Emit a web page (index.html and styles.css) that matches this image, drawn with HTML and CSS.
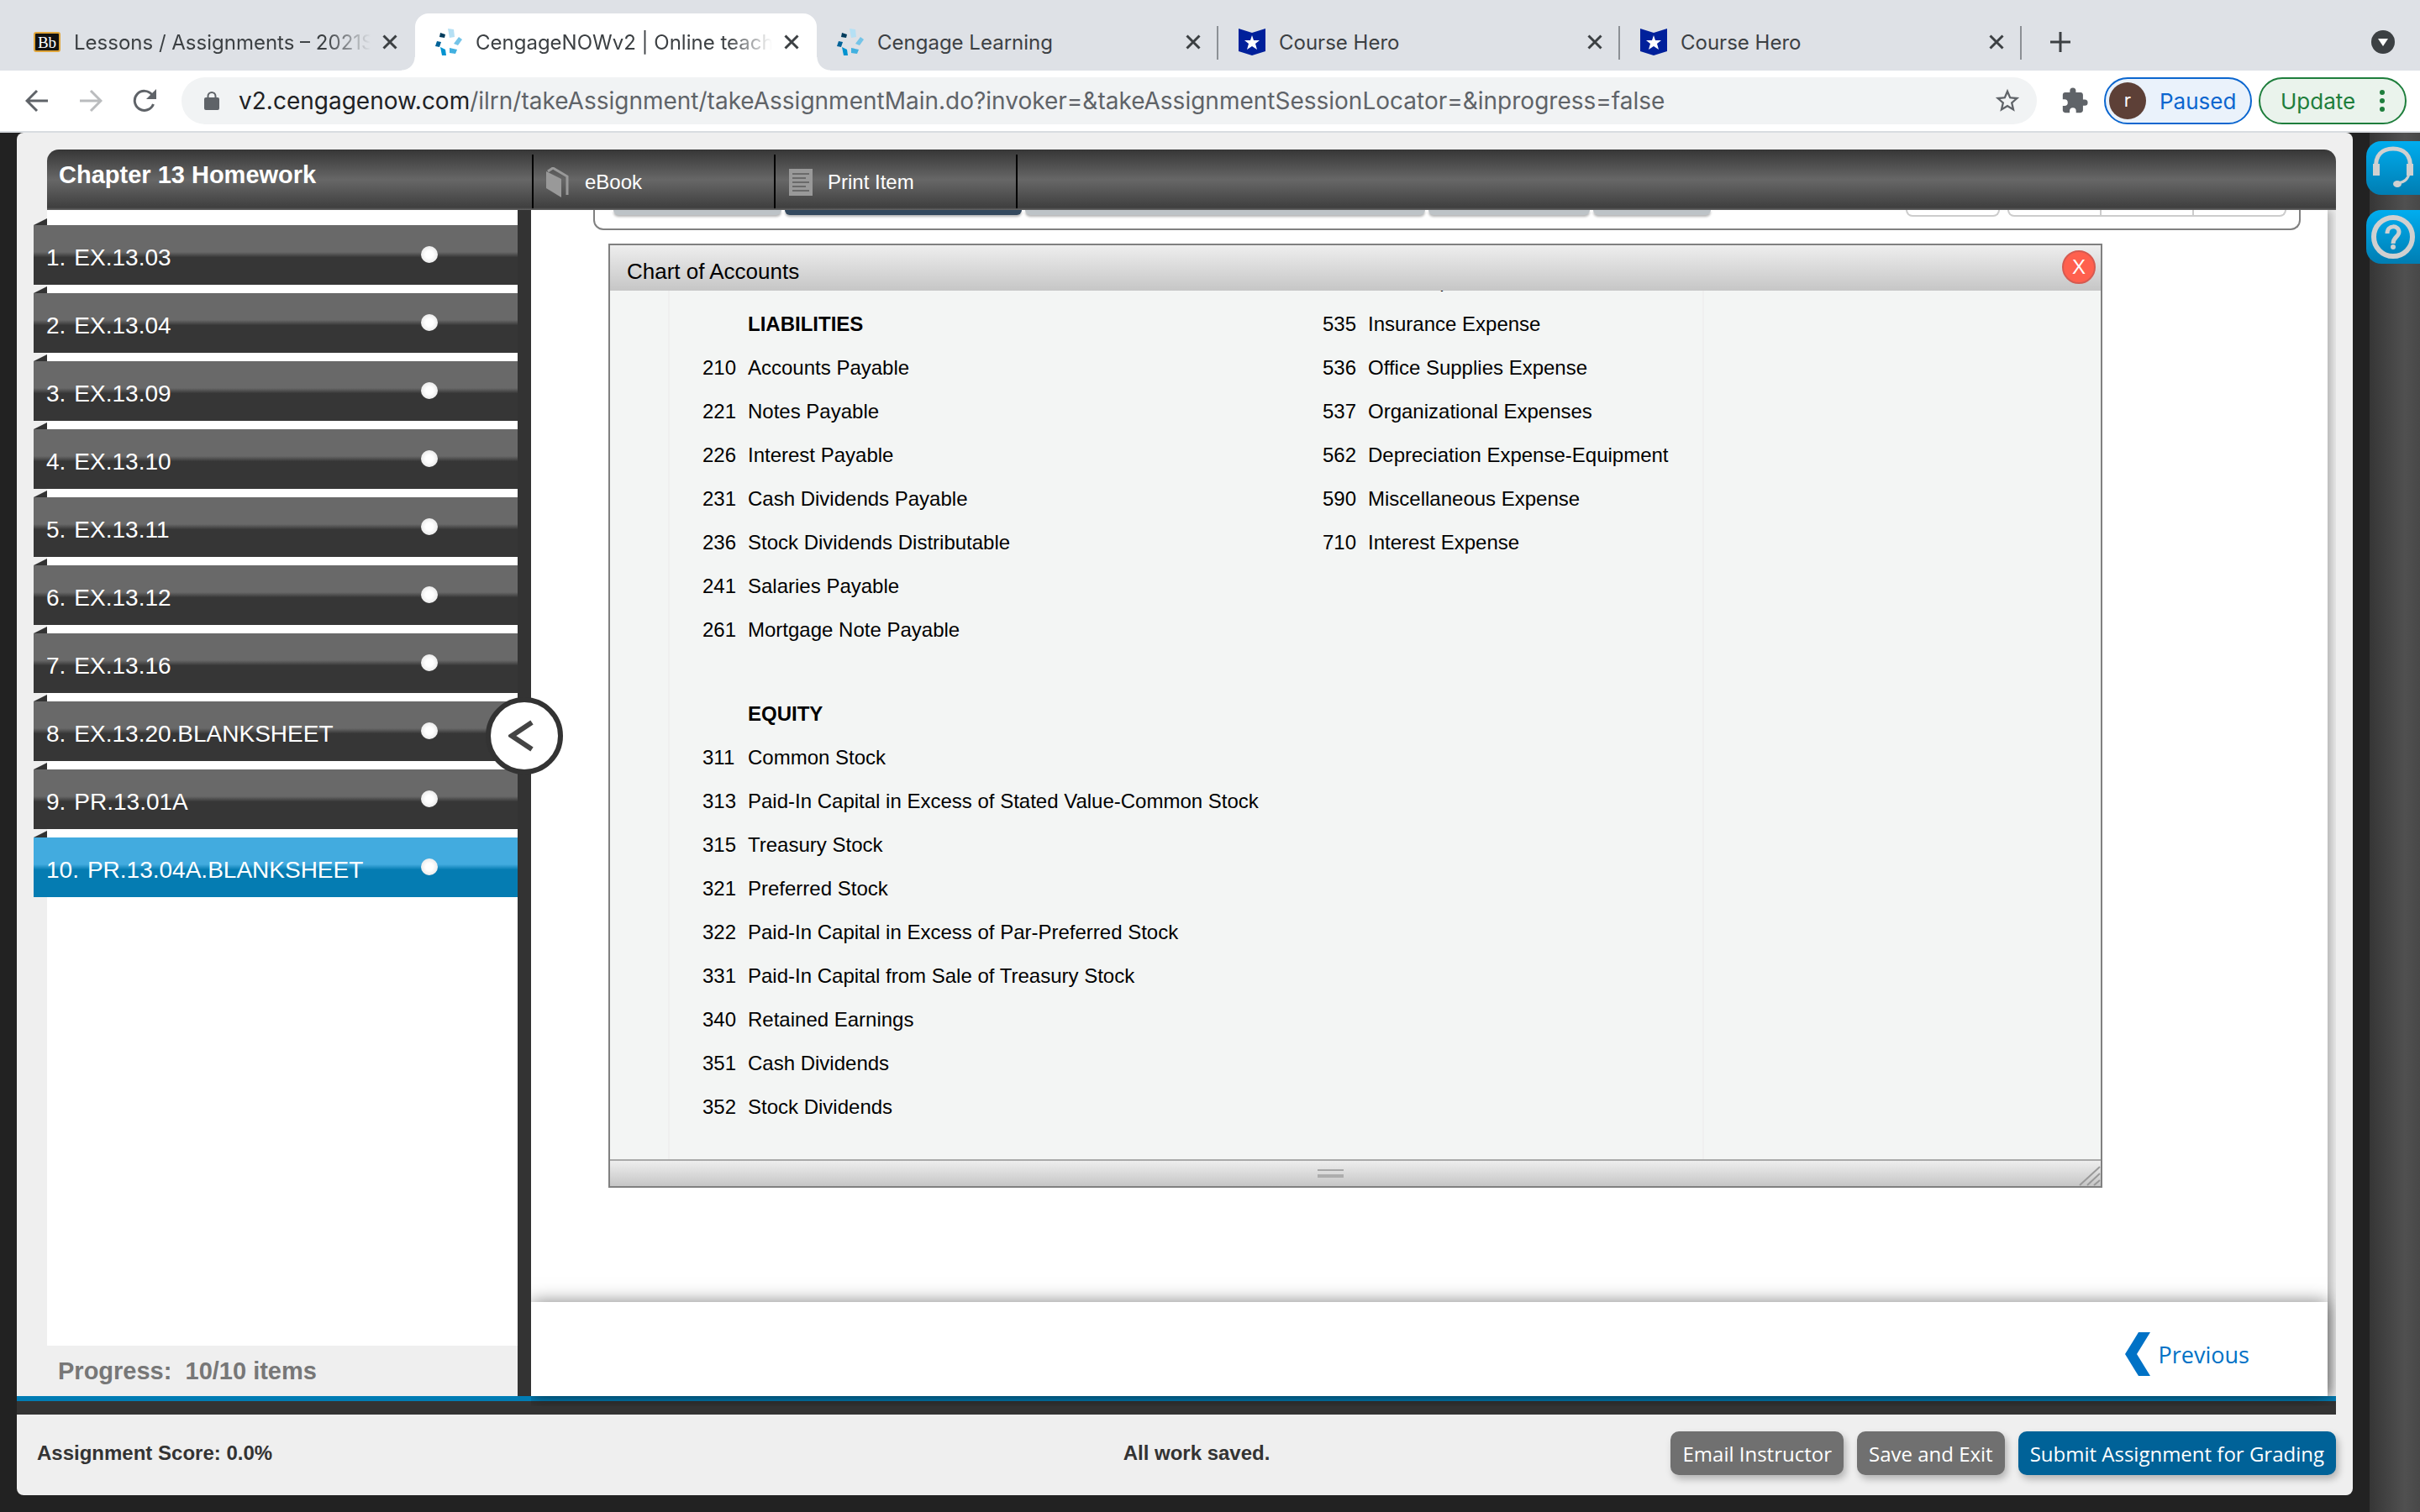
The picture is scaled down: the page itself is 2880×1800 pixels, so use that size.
FILE: index.html
```html
<!DOCTYPE html>
<html lang="en">
<head>
<meta charset="utf-8">
<title>CengageNOWv2 | Online teaching</title>
<link rel="stylesheet" href="styles.css">
</head>
<body>
<svg class="defs" aria-hidden="true">
  <symbol id="close" viewBox="0 0 18 18"><path d="M1.500 1.500l15 15M16.500 1.500l-15 15" stroke="currentColor" stroke-width="3" fill="none"/></symbol>
  <symbol id="cengage" viewBox="0 0 32 32">
    <path fill="#b5e0f4" d="M15 0l7 1 1 9-6 1z"/>
    <path fill="#003b5c" d="M6 5l6 2-1 4-6-1z"/>
    <path fill="#74c4e8" d="M28 10l4 3-5 7-5-2z"/>
    <path fill="#006298" d="M2 15l5 1-2 6-5-1z"/>
    <path fill="#41b0e0" d="M17 23l9 2-2 5-7-1z"/>
    <path fill="#0093d0" d="M6 22l6 3 1 7H8z"/>
  </symbol>
  <symbol id="hero" viewBox="0 0 32 32"><path fill="#00209b" d="M0 0l16 5L32 0v27l-16 5-16-5z"/><path fill="#fff" d="M16 8l2 6h7l-5 4 2 7-6-4-6 4 2-7-5-4h7z"/></symbol>
</svg>

<header class="browser">
  <nav class="tabs" aria-label="Open tabs">
    <div class="tab">
      <svg class="favicon" viewBox="0 0 32 32"><rect x="1" y="5" width="30" height="22" rx="2" fill="#111" stroke="#e0a53a" stroke-width="2"/><text x="16" y="23" text-anchor="middle" class="bb">Bb</text></svg>
      <span class="tab-title faded">Lessons / Assignments – 2021S</span>
      <button class="tab-close" aria-label="Close tab"><svg><use href="#close"/></svg></button>
    </div>
    <div class="tab active">
      <svg class="favicon"><use href="#cengage"/></svg>
      <span class="tab-title faded">CengageNOWv2 | Online teachi</span>
      <button class="tab-close" aria-label="Close tab"><svg><use href="#close"/></svg></button>
    </div>
    <div class="tab ruled">
      <svg class="favicon"><use href="#cengage"/></svg>
      <span class="tab-title">Cengage Learning</span>
      <button class="tab-close" aria-label="Close tab"><svg><use href="#close"/></svg></button>
    </div>
    <div class="tab ruled">
      <svg class="favicon"><use href="#hero"/></svg>
      <span class="tab-title">Course Hero</span>
      <button class="tab-close" aria-label="Close tab"><svg><use href="#close"/></svg></button>
    </div>
    <div class="tab ruled">
      <svg class="favicon"><use href="#hero"/></svg>
      <span class="tab-title">Course Hero</span>
      <button class="tab-close" aria-label="Close tab"><svg><use href="#close"/></svg></button>
    </div>
    <button class="new-tab" aria-label="New tab"><svg viewBox="0 0 24 24"><path d="M12 0v24M0 12h24" stroke="#3c4043" stroke-width="3"/></svg></button>
    <button class="tab-search" aria-label="Search tabs"><svg viewBox="0 0 28 28"><circle cx="14" cy="14" r="14" fill="#3c4043"/><path fill="#fff" d="M8 10h12l-6 9z"/></svg></button>
  </nav>
  <div class="toolbar">
    <button class="nav-btn" aria-label="Back"><svg viewBox="0 0 28 28"><path d="M27 14H3M14 2L2 14l12 12" fill="none" stroke="#5f6368" stroke-width="3"/></svg></button>
    <button class="nav-btn" aria-label="Forward"><svg viewBox="0 0 28 28"><path d="M1 14h24M14 2l12 12-12 12" fill="none" stroke="#babcbe" stroke-width="3"/></svg></button>
    <button class="nav-btn" aria-label="Reload"><svg viewBox="0 0 28 28"><path d="M24.500 18A11.500 11.500 0 1 1 23 7" fill="none" stroke="#5f6368" stroke-width="3"/><path fill="#5f6368" d="M28 0v12H16z"/></svg></button>
    <div class="omnibox">
      <svg class="lock" viewBox="0 0 18 22"><rect y="7" width="18" height="15" rx="2" fill="#5f6368"/><path d="M4.500 8V5.500a4.500 4.500 0 0 1 9 0V8" fill="none" stroke="#5f6368" stroke-width="2"/></svg>
      <span class="url"><b>v2.cengagenow.com</b>/ilrn/takeAssignment/takeAssignmentMain.do?invoker=&amp;takeAssignmentSessionLocator=&amp;inprogress=false</span>
      <button class="star" aria-label="Bookmark"><svg viewBox="0 0 24 24"><path fill="#5f6368" d="M22 9.240l-7.190-.62L12 2 9.190 8.630 2 9.240l5.460 4.730L5.820 21 12 17.270 18.180 21l-1.630-7.030L22 9.240zM12 15.400l-3.760 2.270 1-4.280-3.320-2.880 4.380-.38L12 6.100l1.710 4.040 4.380.38-3.320 2.880 1 4.280L12 15.400z"/></svg></button>
    </div>
    <button class="puzzle" aria-label="Extensions"><svg viewBox="0 0 24 24"><path fill="#5f6368" d="M20.500 11H19V7c0-1.100-.9-2-2-2h-4V3.500a2.500 2.500 0 0 0-5 0V5H4c-1.100 0-2 .9-2 2v3.800h1.500a2.700 2.700 0 0 1 0 5.400H2V20c0 1.100.9 2 2 2h3.800v-1.500a2.700 2.700 0 0 1 5.400 0V22H17c1.100 0 2-.9 2-2v-4h1.500a2.500 2.500 0 0 0 0-5z"/></svg></button>
    <button class="pill paused"><span class="avatar">r</span>Paused</button>
    <button class="pill update">Update<svg viewBox="0 0 6 28"><circle cx="3" cy="4" r="3"/><circle cx="3" cy="14" r="3"/><circle cx="3" cy="24" r="3"/></svg></button>
  </div>
</header>

<div class="page">
  <div class="shell">
    <div class="appbar">
      <h1>Chapter 13 Homework</h1>
      <div class="tools">
        <button class="tool"><svg viewBox="0 0 28 36"><path d="M2 5l6-4 17 10v22" fill="none" stroke="#999" stroke-width="3"/><path fill="#999" d="M0 5l18 9v22L0 25z"/></svg>eBook</button>
        <button class="tool"><svg viewBox="0 0 28 36"><path fill="#999" d="M0 2h28v32H0z"/><path d="M4 8h20M4 13h16M4 18h20M4 23h16M4 28h20" stroke="#6a6a6a" stroke-width="2"/></svg>Print Item</button>
      </div>
    </div>
    <div class="work">
      <aside class="sidebar">
        <ol class="items">
          <li><a href="#i1"><span>1.</span> EX.13.03<i></i></a></li>
          <li><a href="#i2"><span>2.</span> EX.13.04<i></i></a></li>
          <li><a href="#i3"><span>3.</span> EX.13.09<i></i></a></li>
          <li><a href="#i4"><span>4.</span> EX.13.10<i></i></a></li>
          <li><a href="#i5"><span>5.</span> EX.13.11<i></i></a></li>
          <li><a href="#i6"><span>6.</span> EX.13.12<i></i></a></li>
          <li><a href="#i7"><span>7.</span> EX.13.16<i></i></a></li>
          <li><a href="#i8"><span>8.</span> EX.13.20.BLANKSHEET<i></i></a></li>
          <li><a href="#i9"><span>9.</span> PR.13.01A<i></i></a></li>
          <li class="current"><a href="#i10"><span>10.</span> PR.13.04A.BLANKSHEET<i></i></a></li>
        </ol>
        <p class="progress">Progress:&nbsp; 10/10 items</p>
        <button class="collapse" aria-label="Collapse list"><svg viewBox="0 0 30 38"><path d="M28 3L4 19l24 16" fill="none" stroke="#444" stroke-width="6"/></svg></button>
      </aside>
      <main class="content">
        <div class="sheet">
          <div class="panel-tabs">
            <span class="ptab t1"></span><span class="ptab t2"></span><span class="ptab t3"></span><span class="ptab t4"></span><span class="ptab t5"></span>
            <span class="outline single"></span>
            <span class="outline group"><span></span><span></span><span></span></span>
          </div>
          <section class="dialog">
            <header><h2>Chart of Accounts</h2><button class="dismiss" aria-label="Close">X</button></header>
            <div class="dialog-body">
              <div class="accounts">
                <table>
                  <tr><td></td><th></th></tr>
                  <tr><td></td><th>LIABILITIES</th></tr>
                  <tr><td>210</td><td>Accounts Payable</td></tr>
                  <tr><td>221</td><td>Notes Payable</td></tr>
                  <tr><td>226</td><td>Interest Payable</td></tr>
                  <tr><td>231</td><td>Cash Dividends Payable</td></tr>
                  <tr><td>236</td><td>Stock Dividends Distributable</td></tr>
                  <tr><td>241</td><td>Salaries Payable</td></tr>
                  <tr><td>261</td><td>Mortgage Note Payable</td></tr>
                  <tr class="space"><td colspan="2"></td></tr>
                  <tr><td></td><th>EQUITY</th></tr>
                  <tr><td>311</td><td>Common Stock</td></tr>
                  <tr><td>313</td><td>Paid-In Capital in Excess of Stated Value-Common Stock</td></tr>
                  <tr><td>315</td><td>Treasury Stock</td></tr>
                  <tr><td>321</td><td>Preferred Stock</td></tr>
                  <tr><td>322</td><td>Paid-In Capital in Excess of Par-Preferred Stock</td></tr>
                  <tr><td>331</td><td>Paid-In Capital from Sale of Treasury Stock</td></tr>
                  <tr><td>340</td><td>Retained Earnings</td></tr>
                  <tr><td>351</td><td>Cash Dividends</td></tr>
                  <tr><td>352</td><td>Stock Dividends</td></tr>
                </table>
                <table>
                  <tr><td>534</td><td>Rent Expense</td></tr>
                  <tr><td>535</td><td>Insurance Expense</td></tr>
                  <tr><td>536</td><td>Office Supplies Expense</td></tr>
                  <tr><td>537</td><td>Organizational Expenses</td></tr>
                  <tr><td>562</td><td>Depreciation Expense-Equipment</td></tr>
                  <tr><td>590</td><td>Miscellaneous Expense</td></tr>
                  <tr><td>710</td><td>Interest Expense</td></tr>
                </table>
              </div>
            </div>
            <footer><span class="grip"></span><svg class="resize" viewBox="0 0 26 24"><path d="M1 23L25 1M10 23L25 9M18 23l7-6" stroke="#999" stroke-width="2"/></svg></footer>
          </section>
        </div>
        <div class="pager"><a href="#prev"><svg viewBox="0 0 30 52"><path fill="#0072c6" d="M16 0h14L14 26l16 26H16L0 26z"/></svg>Previous</a></div>
      </main>
    </div>
    <div class="rule"></div>
    <footer class="status">
      <p>Assignment Score: 0.0%</p>
      <p class="saved">All work saved.</p>
      <div class="actions"><button>Email Instructor</button><button>Save and Exit</button><button class="primary">Submit Assignment for Grading</button></div>
    </footer>
  </div>
  <div class="gutter">
    <button class="side-tab" aria-label="Support"><svg viewBox="0 0 52 52"><path d="M6 26C4 11 13 3 26 3s22 8 20 23" fill="none" stroke="#d0d0d0" stroke-width="5"/><path d="M6 21v14M46 21v14" stroke="#d0d0d0" stroke-width="8"/><path d="M45 32c-1 8-7 11-13 12" fill="none" stroke="#d0d0d0" stroke-width="3"/><ellipse cx="31" cy="45" rx="5" ry="4" fill="#d0d0d0"/></svg></button>
    <button class="side-tab" aria-label="Help"><svg viewBox="0 0 52 52"><circle cx="26" cy="26" r="23" fill="none" stroke="#d0d0d0" stroke-width="6"/><path d="M19 22c0-11 14-10 14-2 0 6-7 6-7 14" fill="none" stroke="#d0d0d0" stroke-width="5"/><circle cx="26" cy="38" r="3" fill="#d0d0d0"/></svg></button>
  </div>
</div>
</body>
</html>
```
FILE: styles.css
```css
* { box-sizing: border-box; }
body {
  margin: 0;
  min-height: 100vh;
  display: flex;
  flex-direction: column;
  font-family: "Liberation Sans", Arial, sans-serif;
  font-size: 24px;
  background: #222;
}
button { font: inherit; color: inherit; border: 0; padding: 0; background: none; cursor: pointer; }
svg { display: block; }
h1, h2, p, ol { margin: 0; padding: 0; font-size: inherit; }
.defs { display: none; }

/* browser chrome */
.browser { font-family: Inter, sans-serif; background: #fff; border-bottom: 2px solid #d8dce0; }
.tabs { display: flex; height: 84px; padding: 16px 30px 0 16px; background: #dee1e6; align-items: stretch; }
.tab {
  flex: 0 1 478px;
  min-width: 0;
  display: flex;
  align-items: center;
  padding: 0 19px 0 24px;
  color: #3c4043;
  position: relative;
}
.tab.active { background: #fff; border-radius: 16px 16px 0 0; }
.tab.active::before, .tab.active::after {
  content: "";
  position: absolute;
  bottom: 0;
  width: 16px;
  height: 16px;
}
.tab.active::before { left: -16px; background: radial-gradient(circle at 0 0, #dee1e6 15px, #fff 16px); }
.tab.active::after { right: -16px; background: radial-gradient(circle at 100% 0, #dee1e6 15px, #fff 16px); }
.tab.ruled::after {
  content: "";
  position: absolute;
  right: 0;
  top: 15px;
  width: 2px;
  height: 40px;
  background: #8c9095;
}
.favicon { width: 32px; height: 32px; margin-right: 16px; flex: none; }
.bb { font: 19px "Liberation Serif", serif; fill: #fff; }
.tab-title { flex: 1; min-width: 0; white-space: nowrap; overflow: hidden; margin-right: 12px; }
.faded { -webkit-mask-image: linear-gradient(to right, #000 85%, transparent); mask-image: linear-gradient(to right, #000 85%, transparent); }
.tab-close { flex: none; width: 22px; height: 22px; display: grid; place-items: center; }
.tab-close svg { width: 18px; height: 18px; }
.new-tab { margin-left: 34px; }
.new-tab svg { width: 24px; height: 24px; }
.tab-search { margin-left: auto; }
.tab-search svg { width: 28px; height: 28px; }
.toolbar { display: flex; align-items: center; height: 72px; padding: 0 16px 0 30px; }
.nav-btn { margin-right: 36px; }
.nav-btn svg { width: 28px; height: 28px; }
.omnibox {
  flex: 1;
  min-width: 0;
  display: flex;
  align-items: center;
  height: 56px;
  margin-left: -6px;
  padding: 0 18px 0 27px;
  border-radius: 28px;
  background: #f1f3f4;
}
.lock { width: 18px; height: 22px; margin-right: 23px; flex: none; }
.url { flex: 1; min-width: 0; white-space: nowrap; overflow: hidden; font-size: 28px; color: #5f6368; }
.url b { font-weight: 400; color: #202124; }
.star svg { width: 34px; height: 34px; }
.puzzle { margin: 0 18px 0 28px; }
.puzzle svg { width: 34px; height: 34px; }
.pill { display: flex; align-items: center; height: 56px; width: 176px; border: 2px solid; border-radius: 28px; font-size: 26px; }
.paused { color: #0b66cf; background: #eaf2fb; padding-left: 4px; margin-right: 8px; }
.avatar { width: 44px; height: 44px; border-radius: 50%; background: #5d4037; color: #fff; font-size: 22px; line-height: 42px; text-align: center; margin-right: 16px; }
.update { color: #1e7e3c; background: #eaf3ec; padding: 0 24px; justify-content: space-between; }
.update svg { width: 6px; height: 28px; fill: currentColor; }

/* page frame */
.page { flex: 1; display: flex; padding: 0 0 20px 20px; }
.shell { flex: 1; min-width: 0; display: flex; flex-direction: column; background: #efefef; border-radius: 8px; padding-top: 20px; }
.gutter {
  width: 60px;
  margin: 0 0 -20px 20px;
  padding-top: 10px;
  background: linear-gradient(90deg, #363636, #505050 70%, #484848);
}
.side-tab { display: block; width: 64px; height: 64px; margin: 0 0 18px -4px; padding: 6px; border-radius: 18px 0 0 18px; background: linear-gradient(#00adef, #007db2); }
.side-tab svg { width: 52px; height: 52px; }

.appbar {
  position: relative;
  z-index: 2;
  display: flex;
  height: 72px;
  margin: 0 20px 0 36px;
  border-radius: 14px 14px 0 0;
  color: #fff;
  background: linear-gradient(#363636, #676767 50%, #464646 88%, #3f3f3f 96%, #666);
}
.appbar h1 { width: 577px; padding: 0 0 0 14px; font-size: 29px; line-height: 60px; }
.tools { display: flex; padding: 6px 0 2px; }
.tool { display: flex; align-items: center; width: 288px; padding: 2px 0 0 16px; gap: 18px; border-right: 2px solid #000; }
.tool:first-child { border-left: 2px solid #000; width: 290px; padding-left: 15px; }
.tool svg { width: 28px; height: 36px; }

.work { flex: 1; display: flex; }
.sidebar {
  position: relative;
  width: 576px;
  margin-left: 20px;
  display: flex;
  flex-direction: column;
  background: linear-gradient(90deg, transparent 16px, #fff 16px);
}
.work .sidebar { box-sizing: content-box; border-right: 16px solid #333; }
.items { list-style: none; flex: 1; padding-top: 18px; display: flex; flex-direction: column; gap: 10px; }
.items li { position: relative; }
.items li::before { content: ""; position: absolute; left: 0; top: -8px; width: 16px; height: 8px; background: #333; clip-path: polygon(0 100%, 100% 0, 100% 100%); }
.items a {
  display: flex;
  align-items: center;
  height: 71px;
  padding: 6px 95px 0 15px;
  font-size: 28px;
  color: #fff;
  text-decoration: none;
  background: linear-gradient(#696969 45%, #363636 54%);
}
.items span { margin-right: 10px; }
.items .current a { background: linear-gradient(#42abdf 45%, #057cb2 54%); }
.items i { width: 20px; height: 20px; margin: -8px 0 0 auto; border-radius: 50%; background: radial-gradient(#fff 30%, #ddd); }
.progress { padding-left: 29px; height: 60px; line-height: 60px; font-size: 29px; font-weight: 700; color: #777; background: #efefef; }
.collapse {
  position: absolute;
  z-index: 3;
  right: -54px;
  top: 580px;
  width: 92px;
  height: 92px;
  border: 6px solid #333;
  border-radius: 50%;
  background: #fff;
  display: grid;
  place-items: center;
}
.collapse svg { width: 30px; height: 38px; margin-right: 8px; }

.content { flex: 1; min-width: 0; margin-right: 30px; display: flex; flex-direction: column; background: #fff; box-shadow: 5px 0 10px rgba(0, 0, 0, .25); clip-path: inset(0 -10px -12px 0); }
.sheet { flex: 1; padding: 0 32px 0 74px; }
.panel-tabs { display: flex; align-items: flex-start; gap: 4px; height: 24px; padding: 0 15px 0 22px; border: 2px solid #808080; border-top: 0; border-radius: 0 0 12px 12px; }
.ptab { height: 6px; background: #bdc3c7; border-radius: 0 0 6px 6px; box-shadow: 0 2px 3px rgba(0, 0, 0, .3); }
.t1 { width: 200px; }
.t2 { width: 282px; background: #34495e; }
.t3 { width: 476px; }
.t4 { width: 192px; }
.t5 { width: 140px; margin-right: auto; }
.outline { height: 8px; border: 2px solid #ccc; border-top: 0; border-radius: 0 0 8px 8px; }
.single { width: 112px; margin-right: 5px; }
.group { display: flex; width: 332px; }
.group span { flex: 1; }
.group span + span { border-left: 2px solid #ccc; }

.dialog { width: 1778px; max-width: 100%; margin: 16px 0 0 18px; border: 2px solid #808080; background: #f3f5f4; }
.dialog header { display: flex; justify-content: space-between; align-items: center; height: 54px; padding: 0 6px 2px 20px; background: linear-gradient(#eee, #c6c6c6); }
.dialog h2 { font-size: 26px; font-weight: 400; padding-top: 10px; }
.dismiss { width: 40px; height: 40px; border-radius: 50%; border: 2px solid #d65a50; background: #ff604e; color: #fff; }
.dialog-body { overflow: hidden; }
.accounts { display: flex; width: 1233px; margin: -38px 0 0 69px; padding: 0 0 36px 39px; border: 2px solid #efefef; border-width: 0 2px; }
.accounts table { border-collapse: collapse; align-self: flex-start; width: 738px; }
.accounts table + table { width: auto; }
.accounts tr { height: 52px; }
.accounts .space { height: 48px; }
.accounts td, .accounts th { padding: 0; text-align: left; white-space: nowrap; }
.accounts tr > :first-child { width: 54px; }
.dialog footer { display: flex; height: 32px; border-top: 2px solid #a9a9a9; background: linear-gradient(#eee, #c6c6c6); align-items: flex-end; }
.grip { width: 31px; height: 10px; margin: auto 0 auto 842px; border-top: 2px solid #a6a6a6; border-bottom: 4px solid #adadad; }
.resize { width: 26px; height: 24px; margin-left: auto; }

.pager { display: flex; justify-content: flex-end; align-items: center; height: 112px; padding: 12px 93px 0 0; background: #fff; box-shadow: 0 0 20px rgba(0, 0, 0, .5); font: 27px "Open Sans", sans-serif; }
.pager a { display: flex; align-items: center; gap: 10px; color: #0072c6; text-decoration: none; }
.pager svg { width: 30px; height: 52px; }

.rule { height: 22px; margin-right: 20px; border-top: 6px solid #007cb4; background: #333; }
.status { display: grid; grid-template-columns: 1fr auto 1fr; align-items: center; height: 96px; padding: 0 20px 4px 24px; color: #333; font-weight: 700; }
.saved { margin-left: 24px; }
.actions { display: flex; justify-content: flex-end; gap: 16px; }
.actions button { height: 52px; padding: 0 14px; border-radius: 10px; color: #fff; background: #707070; font: 24px "Open Sans", sans-serif; white-space: nowrap; box-shadow: 3px 5px 8px rgba(0, 0, 0, .25); }
.actions .primary { background: #006298; }
```
